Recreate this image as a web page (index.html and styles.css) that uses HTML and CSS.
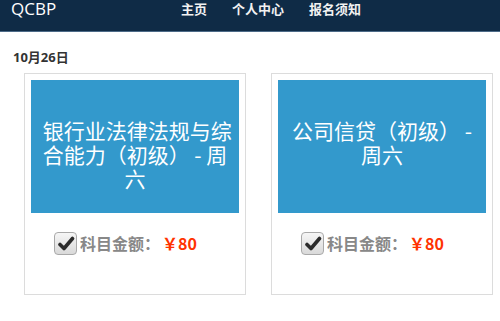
FILE: index.html
```html
<!DOCTYPE html>
<html lang="zh-CN">
<head>
    <meta charset="UTF-8">
    <meta name="viewport" content="width=device-width, initial-scale=1.0">
    <title>QCBP - 报名</title>
    <link rel="stylesheet" href="styles.css">
</head>
<body>
    <div class="navbar">
        <span class="brand">QCBP</span>
        <ul class="nav-links">
            <li>主页</li>
            <li>个人中心</li>
            <li>报名须知</li>
        </ul>
    </div>

    <h4 class="date">10月26日</h4>

    <div class="cards">
        <div class="card">
            <div class="subject">&nbsp;银行业法律法规与综合能力（初级） - 周六</div>
            <div class="price-row">
                <span class="check">
                    <svg width="18" height="18" viewBox="0 0 18 18"><polyline points="3,9.5 7,13.5 15.5,3.5" fill="none" stroke="#2b2b2b" stroke-width="3.6" stroke-linecap="round" stroke-linejoin="round"/></svg>
                </span>
                <span class="label">科目金额：</span><span class="price">￥80</span>
            </div>
        </div>
        <div class="card">
            <div class="subject">公司信贷（初级） - 周六</div>
            <div class="price-row">
                <span class="check">
                    <svg width="18" height="18" viewBox="0 0 18 18"><polyline points="3,9.5 7,13.5 15.5,3.5" fill="none" stroke="#2b2b2b" stroke-width="3.6" stroke-linecap="round" stroke-linejoin="round"/></svg>
                </span>
                <span class="label">科目金额：</span><span class="price">￥80</span>
            </div>
        </div>
    </div>
</body>
</html>
```

FILE: styles.css
```css
body {
    margin: 0;
    font-family: "Open Sans", "Noto Sans CJK SC", sans-serif;
    background-color: #fff;
    color: #333;
}
.navbar {
    display: flex;
    height: 31px;
    background-color: #0f2b46;
    border-bottom: 1px solid #4d6b88;
    padding-left: 11px;
}
.brand {
    width: 170px;
    color: #fff;
    font-size: 17px;
    line-height: 18px;
}
.nav-links {
    display: flex;
    gap: 25px;
    margin: 0;
    padding: 0;
    list-style: none;
}
.nav-links li {
    color: #f2f2f2;
    font-family: "Noto Sans CJK SC", sans-serif;
    font-size: 13px;
    font-weight: bold;
    line-height: 18px;
}
.date {
    margin: 16px 0 7px 13px;
    font-size: 13px;
    font-weight: bold;
    line-height: 18px;
}
.cards {
    display: flex;
    gap: 25px;
    padding-left: 24px;
}
.card {
    width: 222px;
    height: 222px;
    box-sizing: border-box;
    border: 1px solid #dcdcdc;
    padding: 6px;
}
.subject {
    height: 133px;
    box-sizing: border-box;
    padding: 38px 4px 0;
    background-color: #3399cc;
    color: #fff;
    font-family: "Noto Sans CJK SC", sans-serif;
    font-size: 21px;
    line-height: 24px;
    text-align: center;
}
.price-row {
    display: flex;
    align-items: center;
    margin-top: 19px;
    padding-left: 23px;
    font-family: "Noto Sans CJK SC", sans-serif;
    font-size: 16px;
    font-weight: bold;
    line-height: 23px;
}
.check {
    display: flex;
    align-items: center;
    justify-content: center;
    width: 23px;
    height: 23px;
    box-sizing: border-box;
    border: 1px solid #a9a9a9;
    border-radius: 4px;
    background: linear-gradient(#f6f6f6, #d9d9d9);
    margin-right: 3px;
}
.label {
    color: #888;
}
.price {
    color: #ff3300;
    margin-left: 2px;
}
```
